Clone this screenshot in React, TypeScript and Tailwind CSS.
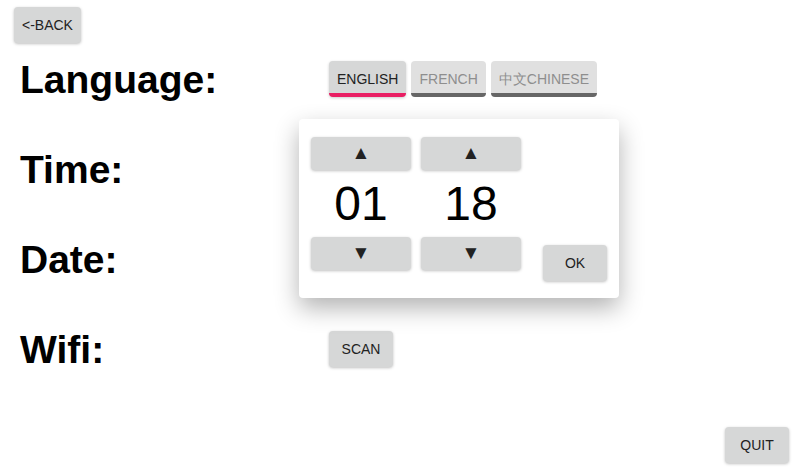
import React from "react";

const btn =
    "h-9 min-w-16 px-2 rounded bg-[#d6d7d7] text-[14px] text-[#222] uppercase shadow-[0_1px_3px_rgba(0,0,0,0.25)] flex items-center justify-center";

function LangButton({label, active}: { label: string; active?: boolean }) {
    return (
        <button
            className={
                active
                    ? "h-9 px-2 rounded bg-[#d6d7d7] text-[14px] text-[#222] uppercase border-b-4 border-[#e91e63] pt-1 shadow-[0_1px_3px_rgba(0,0,0,0.2)]"
                    : "h-9 px-2 rounded bg-[#e0e0e0] text-[14px] text-[#8e8e8e] uppercase border-b-4 border-[#666] pt-1"
            }
        >
            {label}
        </button>
    );
}

function Spinner({value}: { value: string }) {
    return (
        <div className="flex flex-col w-[100px]">
            <button className={btn + " h-[33px] text-[19px]"}>▲</button>
            <div className="h-[67px] flex items-center justify-center text-[48px] text-black leading-none">
                {value}
            </div>
            <button className={btn + " h-[33px] text-[19px]"}>▼</button>
        </div>
    );
}

export default function App() {
    const rows = ["Language:", "Time:", "Date:", "Wifi:"];

    return (
        <div className="relative w-[797px] h-[476px] bg-white font-['Liberation_Sans',Arial,sans-serif] overflow-hidden">
            <div className="pl-[14px] pt-[7px]">
                <button className={btn}>&lt;-BACK</button>
            </div>

            <div className="grid grid-cols-[309px_1fr] pl-[20px] -mt-[9px]">
                {rows.map((label, i) => (
                    <React.Fragment key={label}>
                        <div className="h-[90px] flex items-center text-[39px] font-bold leading-none text-black">
                            {label}
                        </div>
                        <div className="h-[90px] flex items-center gap-[5px]">
                            {i === 0 && (
                                <>
                                    <LangButton label="English" active/>
                                    <LangButton label="French"/>
                                    <LangButton label="中文Chinese"/>
                                </>
                            )}
                            {i === 3 && <button className={btn}>Scan</button>}
                        </div>
                    </React.Fragment>
                ))}
            </div>

            <div className="absolute right-[8px] bottom-[13px]">
                <button className={btn}>Quit</button>
            </div>

            {/* time picker popup */}
            <div className="absolute left-[299px] top-[119px] w-[320px] h-[179px] bg-white rounded-sm shadow-[0_10px_24px_rgba(0,0,0,0.3)] pl-[12px] pt-[18px] pr-[12px] flex gap-[10px]">
                <Spinner value="01"/>
                <Spinner value="18"/>
                <div className="flex-1 flex justify-end items-start pt-[108px]">
                    <button className={btn}>OK</button>
                </div>
            </div>
        </div>
    );
}
